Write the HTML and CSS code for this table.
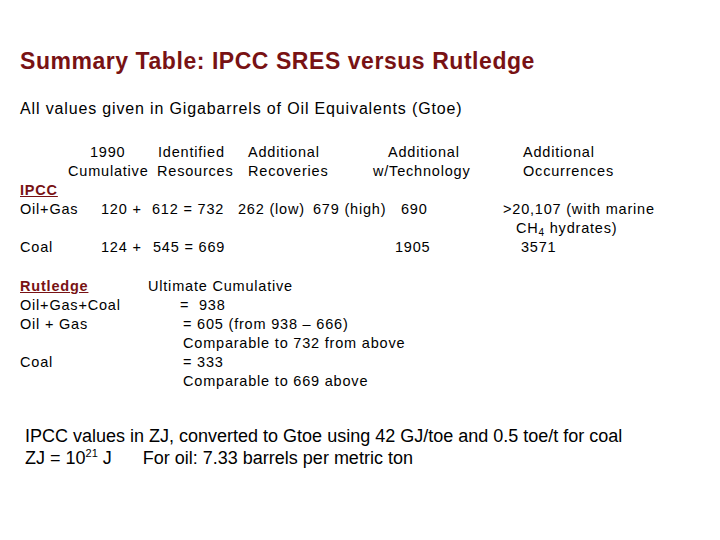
FILE: index.html
```html
<!DOCTYPE html>
<html>
<head>
<meta charset="utf-8">
<link rel="stylesheet" href="styles.css">
</head>
<body>
<div class="slide">
  <h1 class="title">Summary Table: IPCC SRES versus Rutledge</h1>
  <p class="sub">All values given in Gigabarrels of Oil Equivalents (Gtoe)</p>

  <div class="table">
    <div class="row h1row"><span class="w68">1990</span><span class="w90">Identified</span><span class="w140">Additional</span><span class="w135">Additional</span><span>Additional</span></div>
    <div class="row h2row"><span class="w89">Cumulative</span><span class="w91">Resources</span><span class="w125">Recoveries</span><span class="w150">w/Technology</span><span>Occurrences</span></div>
    <div class="row"><span class="label">IPCC</span></div>
    <div class="row"><span class="w81">Oil+Gas</span><span class="w51">120 +</span><span class="w86">612 = 732</span><span class="w75">262 (low)</span><span class="w88">679 (high)</span><span class="w102">690</span><span>&gt;20,107 (with marine</span></div>
    <div class="row ch4row"><span>CH<sub>4</sub> hydrates)</span></div>
    <div class="row"><span class="w81">Coal</span><span class="w52">124 +</span><span class="w242">545 = 669</span><span class="w126">1905</span><span>3571</span></div>
  </div>

  <div class="table rut">
    <div class="row"><span class="w128 label">Rutledge</span><span>Ultimate Cumulative</span></div>
    <div class="row"><span class="w160">Oil+Gas+Coal</span><span>=&nbsp; 938</span></div>
    <div class="row"><span class="w163">Oil + Gas</span><span>= 605 (from 938 – 666)</span></div>
    <div class="row"><span class="w163"></span><span>Comparable to 732 from above</span></div>
    <div class="row"><span class="w163">Coal</span><span>= 333</span></div>
    <div class="row"><span class="w163"></span><span>Comparable to 669 above</span></div>
  </div>

  <div class="foot">
    <p>IPCC values in ZJ, converted to Gtoe using 42 GJ/toe and 0.5 toe/t for coal</p>
    <p>ZJ = 10<sup>21</sup> J<span class="gap"></span>For oil: 7.33 barrels per metric ton</p>
  </div>
</div>
</body>
</html>
```
FILE: styles.css
```css
html, body {
  margin: 0;
  padding: 0;
  background: #ffffff;
}
.slide {
  width: 720px;
  height: 540px;
  box-sizing: border-box;
  padding: 49px 0 0 20px;
  font-family: "Liberation Sans", Arial, sans-serif;
  color: #000;
}
.title {
  margin: 0;
  font-size: 23px;
  line-height: 24px;
  font-weight: bold;
  letter-spacing: 0.55px;
  color: #781214;
}
.sub {
  margin: 26px 0 0 0;
  font-size: 16px;
  line-height: 20px;
  letter-spacing: 0.85px;
}
.table {
  margin-top: 24px;
  font-size: 14.5px;
  line-height: 19px;
  letter-spacing: 0.8px;
}
.rut {
  margin-top: 20px;
}
.row {
  display: flex;
  height: 19px;
  white-space: nowrap;
}
.row > span {
  flex: none;
}
.h1row { padding-left: 70px; }
.h2row { padding-left: 48px; }
.ch4row { padding-left: 496px; }
.label {
  color: #781214;
  font-weight: bold;
  text-decoration: underline;
}
sub {
  font-size: 10px;
  line-height: 0;
  vertical-align: -3px;
}
.w51 { width: 51px; }
.w52 { width: 52px; }
.w68 { width: 68px; }
.w75 { width: 75px; }
.w81 { width: 81px; }
.w86 { width: 86px; }
.w88 { width: 88px; }
.w89 { width: 89px; }
.w90 { width: 90px; }
.w91 { width: 91px; }
.w102 { width: 102px; }
.w125 { width: 125px; }
.w126 { width: 126px; }
.w128 { width: 128px; }
.w135 { width: 135px; }
.w140 { width: 140px; }
.w150 { width: 150px; }
.w160 { width: 160px; }
.w163 { width: 163px; }
.w242 { width: 242px; }
.foot {
  margin-top: 34px;
  padding-left: 5px;
  font-size: 18px;
  line-height: 22px;
}
.foot p {
  margin: 0;
  white-space: nowrap;
}
sup {
  font-size: 11px;
  line-height: 0;
  vertical-align: 7px;
}
.gap {
  display: inline-block;
  width: 31px;
}
```
